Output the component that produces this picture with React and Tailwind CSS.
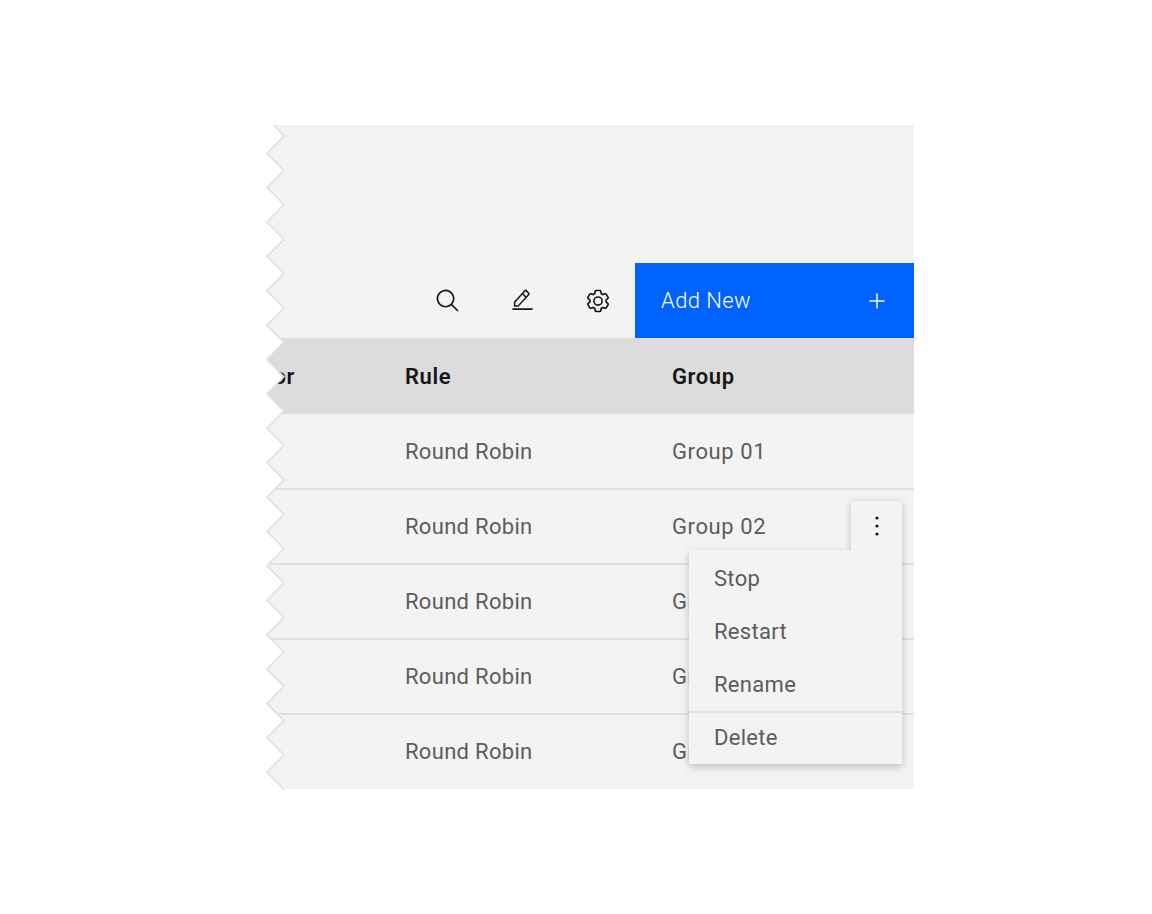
const P = 34.39;
const H = P / 2;
function zigzag() {
  const pts = [[7, 0]];
  // y is relative to the panel top (125); the first right-hand peak is at y=11
  let y = 11;
  let right = true;
  while (y < 664 + H) {
    pts.push([right ? 17 : 0, y]);
    y += H;
    right = !right;
  }
  return pts;
}
function Edge() {
  const pts = zigzag().filter((p) => p[1] <= 664.5);
  const line = pts.map((p) => p.join(",")).join(" ");
  return (
    <svg className="absolute left-[-1px] top-0 h-[664px] w-[20px] overflow-visible" viewBox="0 0 20 664" fill="none">
      <polygon points={`-2,-2 ${line} 17,664 17,668 -2,668`} fill="#ffffff" />
      <polyline points={line} stroke="#e0e0e0" strokeWidth="1.5" transform="translate(1 0)" />
    </svg>
  );
}
const Row = ({ g, className }) => (
  <div className={`flex items-center text-[22px] tracking-[0.3px] text-[#5c5c5c] ${className}`}>
    <div className="w-[138px]" />
    <div className="w-[267px]">Round Robin</div>
    <div className="tracking-[0.6px]">{g}</div>
  </div>
);
const Search = () => (
  <svg width="26" height="26" viewBox="0 0 32 32" fill="#161616"><path d="M29 27.5859l-7.5521-7.5521a11.0177 11.0177 0 1 0-1.4141 1.4141L27.5859 29ZM4 13a9 9 0 1 1 9 9A9.01 9.01 0 0 1 4 13Z" /></svg>
);
const Edit = () => (
  <svg width="23" height="25" viewBox="0 0 32 32" preserveAspectRatio="none" fill="#161616"><path d="M2 26h28v2H2zM25.4 9c.8-.8.8-2 0-2.8l-3.6-3.6c-.8-.8-2-.8-2.8 0l-15 15V24h6.4l15-15zm-5-5L24 7.6l-3 3L17.4 7l3-3zM6 22v-3.6l10-10l3.6 3.6l-10 10H6z" /></svg>
);
const Gear = () => (
  <svg width="26" height="26" viewBox="0 0 32 32" fill="#161616"><path d="M27 16.76c0-.25 0-.5 0-.76s0-.51 0-.77l1.92-1.68A2 2 0 0 0 29.3 11L26.94 7a2 2 0 0 0-1.73-1a2 2 0 0 0-.64.1l-2.43.82a11.35 11.35 0 0 0-1.31-.75l-.51-2.52a2 2 0 0 0-2-1.61h-4.68a2 2 0 0 0-2 1.61l-.51 2.52a11.48 11.48 0 0 0-1.32.75l-2.38-.86A2 2 0 0 0 6.79 6a2 2 0 0 0-1.73 1L2.7 11a2 2 0 0 0 .41 2.51L5 15.24c0 .25 0 .5 0 .76s0 .51 0 .77l-1.92 1.68A2 2 0 0 0 2.7 21l2.36 4a2 2 0 0 0 1.73 1a2 2 0 0 0 .64-.1l2.43-.82a11.35 11.35 0 0 0 1.31.75l.51 2.52a2 2 0 0 0 2 1.61h4.72a2 2 0 0 0 2-1.61l.51-2.52a11.48 11.48 0 0 0 1.32-.75l2.42.82a2 2 0 0 0 .64.1a2 2 0 0 0 1.73-1l2.28-4a2 2 0 0 0-.41-2.51ZM25.21 24l-3.43-1.16a8.86 8.86 0 0 1-2.71 1.57L18.36 28h-4.72l-.71-3.55a9.36 9.36 0 0 1-2.7-1.57L6.79 24l-2.36-4l2.72-2.4a8.9 8.9 0 0 1 0-3.13L4.43 12l2.36-4l3.43 1.16a8.86 8.86 0 0 1 2.71-1.57L13.64 4h4.72l.71 3.55a9.36 9.36 0 0 1 2.7 1.57L25.21 8l2.36 4l-2.72 2.4a8.9 8.9 0 0 1 0 3.13L27.57 20Z" /><path d="M16 22a6 6 0 1 1 6-6a5.94 5.94 0 0 1-6 6Zm0-10a3.91 3.91 0 0 0-4 4a3.91 3.91 0 0 0 4 4a3.91 3.91 0 0 0 4-4a3.91 3.91 0 0 0-4-4Z" /></svg>
);
export default function App() {
  return (
    <div className="h-[914px] w-[1152px] bg-white pl-[267px] pt-[125px] font-['Roboto',sans-serif]">
      <div className="relative h-[664px] w-[647px] bg-[#f3f3f3]">
        <div className="h-[138px]" />
        <div className="flex h-[75px] items-stretch">
          <div className="flex-1" />
          <div className="flex w-[75px] items-center justify-center"><Search /></div>
          <div className="flex w-[75px] items-center justify-center"><Edit /></div>
          <div className="flex w-[75px] items-center justify-center"><Gear /></div>
          <div className="flex w-[279px] items-center justify-between bg-[#0062ff] pl-[26px] pr-[26px] text-[22px] font-light tracking-[0.4px] text-white">
            <span>Add New</span>
            <svg width="22" height="22" viewBox="0 0 22 22" stroke="#ffffff" strokeWidth="1.5"><path d="M11 3.5v15M3.5 11h15" /></svg>
          </div>
        </div>
        <div className="flex h-[76px] items-center bg-[#dcdcdc] text-[22px] font-semibold tracking-[0.6px] text-[#161616]">
          <div className="flex w-[138px] justify-end overflow-hidden pr-[110px]">Operator</div>
          <div className="w-[267px]">Rule</div>
          <div>Group</div>
        </div>
        <Row g="Group 01" className="h-[76px] border-b-2 border-[#e0e0e0]" />
        <Row g="Group 02" className="h-[75px] border-b-2 border-[#e0e0e0]" />
        <Row g="Group 03" className="h-[75px] border-b-2 border-[#e0e0e0]" />
        <Row g="Group 04" className="h-[75px] border-b-2 border-[#e0e0e0]" />
        <Row g="Group 05" className="h-[74px] pb-[2px]" />
        <Edge />
        <div className="absolute left-[422px] top-[376px] w-[213px]">
          <div className="ml-auto flex h-[49px] w-[51px] items-center justify-center bg-[#f3f3f3] shadow-[0_2px_8px_rgba(0,0,0,0.22)]">
            <svg width="6" height="22" viewBox="0 0 6 22" fill="#161616"><circle cx="3" cy="3" r="1.6" /><circle cx="3" cy="11" r="1.6" /><circle cx="3" cy="19" r="1.6" /></svg>
          </div>
          <div className="relative bg-[#f3f3f3] text-[22px] tracking-[0.3px] text-[#5c5c5c] shadow-[0_3px_8px_rgba(0,0,0,0.22)]">
            <div className="flex h-[55px] items-center pl-[25px] pt-[2px]">Stop</div>
            <div className="flex h-[53px] items-center pl-[25px]">Restart</div>
            <div className="flex h-[53px] items-center pl-[25px]">Rename</div>
            <div className="flex h-[53px] items-center border-t-2 border-[#e0e0e0] pb-[3px] pl-[25px]">Delete</div>
          </div>
          <div className="absolute right-0 top-[44px] h-[10px] w-[51px] bg-[#f3f3f3]" />
        </div>
      </div>
    </div>
  );
}
